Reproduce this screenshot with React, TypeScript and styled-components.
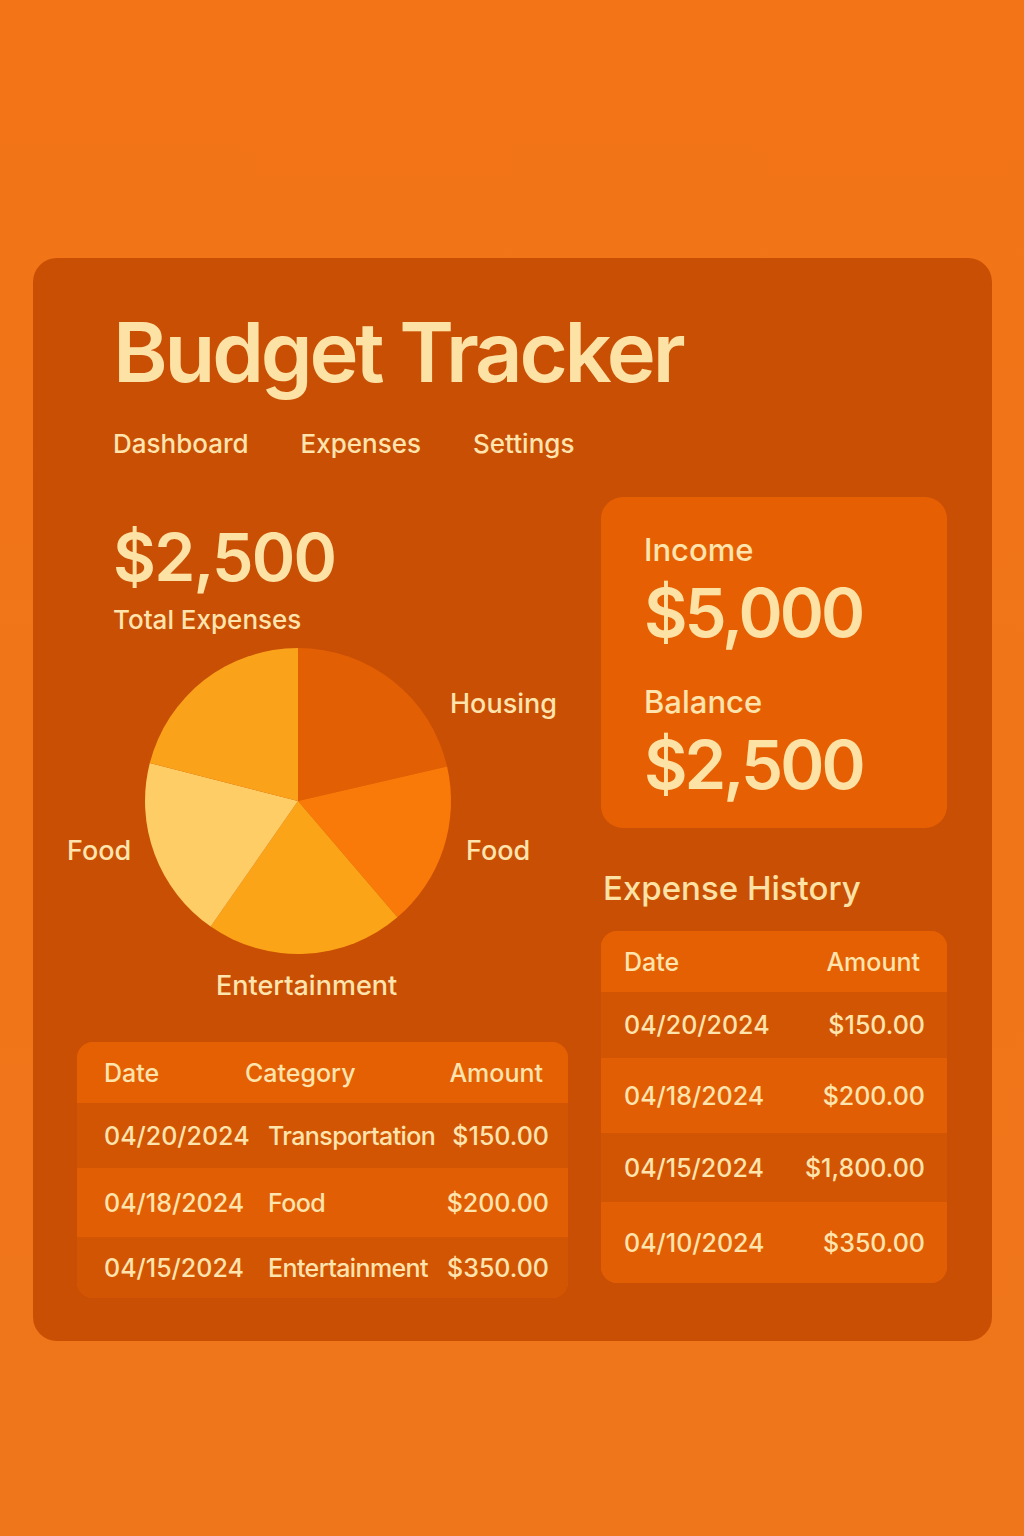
import React from 'react';
import styled, { createGlobalStyle } from 'styled-components';

const GlobalStyle = createGlobalStyle`
  html, body {
    margin: 0;
    padding: 0;
    background: #f0741a;
  }
  body {
    font-family: Inter, "Noto Sans", "Liberation Sans", sans-serif;
    color: #ffe4ae;
  }
`;

const slices = [
  { from: 0, to: 77, color: '#e35f04' },
  { from: 77, to: 139.5, color: '#f97a08' },
  { from: 139.5, to: 214.8, color: '#fba418' },
  { from: 214.8, to: 284.4, color: '#fecd65' },
  { from: 284.4, to: 360, color: '#fba21b' },
];

const recent = [
  { date: '04/20/2024', category: 'Transportation', amount: '$150.00', h: 65 },
  { date: '04/18/2024', category: 'Food', amount: '$200.00', h: 69 },
  { date: '04/15/2024', category: 'Entertainment', amount: '$350.00', h: 61 },
];

const history = [
  { date: '04/20/2024', amount: '$150.00', h: 66 },
  { date: '04/18/2024', amount: '$200.00', h: 75 },
  { date: '04/15/2024', amount: '$1,800.00', h: 69 },
  { date: '04/10/2024', amount: '$350.00', h: 81 },
];

const CX = 221;
const CY = 164;
const R = 153;

function pt(a: number) {
  const rad = (a * Math.PI) / 180;
  return `${(CX + R * Math.sin(rad)).toFixed(1)} ${(CY - R * Math.cos(rad)).toFixed(1)}`;
}

function PieChart() {
  return (
    <ChartSvg width="491" height="380" viewBox="0 0 491 380">
      {slices.map((s, i) => (
        <path
          key={i}
          d={`M${CX} ${CY} L${pt(s.from)} A${R} ${R} 0 0 1 ${pt(s.to)} Z`}
          fill={s.color}
        />
      ))}
      <text x="373" y="76">Housing</text>
      <text x="389" y="223">Food</text>
      <text x="-10" y="223">Food</text>
      <text x="139" y="358">Entertainment</text>
    </ChartSvg>
  );
}

export default function App() {
  return (
    <>
      <GlobalStyle />
      <Page>
        <Card>
          <Header>
            <Title>Budget Tracker</Title>
            <Nav>
              <NavItem>Dashboard</NavItem>
              <NavItem>Expenses</NavItem>
              <NavItem>Settings</NavItem>
            </Nav>
          </Header>
          <Main>
            <LeftCol>
              <Summary>
                <BigAmount>$2,500</BigAmount>
                <SummaryLabel>Total Expenses</SummaryLabel>
              </Summary>
              <PieChart />
              <Table>
                <Row $head>
                  <Cell>Date</Cell>
                  <Cell>Category</Cell>
                  <Cell $right>Amount</Cell>
                </Row>
                {recent.map((r, i) => (
                  <Row key={r.date} $dark={i % 2 === 0} $h={r.h}>
                    <Cell>{r.date}</Cell>
                    <Cell $narrow>{r.category}</Cell>
                    <Cell $right>{r.amount}</Cell>
                  </Row>
                ))}
              </Table>
            </LeftCol>
            <RightCol>
              <StatBox>
                <StatLabel>Income</StatLabel>
                <StatValue>$5,000</StatValue>
                <StatLabel $spaced>Balance</StatLabel>
                <StatValue>$2,500</StatValue>
              </StatBox>
              <SectionTitle>Expense History</SectionTitle>
              <HistoryTable>
                <HistoryRow $head>
                  <Cell>Date</Cell>
                  <Cell $right>Amount</Cell>
                </HistoryRow>
                {history.map((r, i) => (
                  <HistoryRow key={r.date} $dark={i % 2 === 0} $h={r.h}>
                    <Cell>{r.date}</Cell>
                    <Cell $right>{r.amount}</Cell>
                  </HistoryRow>
                ))}
              </HistoryTable>
            </RightCol>
          </Main>
        </Card>
      </Page>
    </>
  );
}

const Page = styled.div`
  width: 1024px;
  height: 1536px;
  box-sizing: border-box;
  padding: 258px 32px 0 33px;
  background: linear-gradient(180deg, #f27416 0%, #f07519 50%, #f0761b 100%);
`;

const Card = styled.div`
  box-sizing: border-box;
  width: 959px;
  height: 1083px;
  padding: 52px 45px 0 44px;
  background: #c94f04;
  border-radius: 24px;
`;

const Header = styled.div`
  padding-left: 36px;
`;

const Title = styled.h1`
  margin: 0;
  font-size: 83px;
  line-height: 84px;
  font-weight: 600;
  letter-spacing: -3.2px;
  color: #fde2a6;
`;

const Nav = styled.nav`
  display: flex;
  gap: 52px;
  margin-top: 34px;
`;

const NavItem = styled.span`
  font-size: 26px;
  line-height: 32px;
  font-weight: 500;
`;

const Main = styled.div`
  display: grid;
  grid-template-columns: 491px 346px;
  gap: 33px;
  margin-top: 37px;
`;

const LeftCol = styled.div`
  display: flex;
  flex-direction: column;
`;

const Summary = styled.div`
  padding: 24px 0 0 36px;
`;

const BigAmount = styled.div`
  font-size: 66px;
  line-height: 72px;
  font-weight: 600;
  letter-spacing: -1.8px;
  color: #fde2a6;
`;

const SummaryLabel = styled.div`
  margin-top: 11px;
  font-size: 26px;
  line-height: 32px;
  font-weight: 500;
`;

const ChartSvg = styled.svg`
  display: block;
  margin-top: 1px;
  overflow: visible;

  text {
    fill: #ffe4ae;
    font-family: Inter, "Noto Sans", sans-serif;
    font-size: 27px;
    font-weight: 500;
  }
`;

const Table = styled.div`
  margin-top: 25px;
  border-radius: 16px;
  overflow: hidden;
  background: #e25e04;
`;

const Row = styled.div<{ $head?: boolean; $dark?: boolean; $h?: number }>`
  display: grid;
  grid-template-columns: ${(p) => (p.$head ? '141px 1fr auto' : '164px 1fr auto')};
  align-items: center;
  height: ${(p) => (p.$head ? 61 : p.$h ?? 65)}px;
  padding: ${(p) => (p.$head ? '0 25px 0 27px' : '0 19px 0 27px')};
  background: ${(p) => (p.$head ? '#e46003' : p.$dark ? '#d25504' : '#e25e04')};
  font-size: 25px;
  font-weight: 500;
`;

const Cell = styled.span<{ $right?: boolean; $narrow?: boolean }>`
  text-align: ${(p) => (p.$right ? 'right' : 'left')};
  letter-spacing: ${(p) => (p.$narrow ? '-0.6px' : 'normal')};
  white-space: nowrap;
`;

const RightCol = styled.div`
  display: flex;
  flex-direction: column;
`;

const StatBox = styled.div`
  box-sizing: border-box;
  height: 331px;
  padding: 35px 0 0 43px;
  background: #e66003;
  border-radius: 22px;
`;

const StatLabel = styled.div<{ $spaced?: boolean }>`
  margin-top: ${(p) => (p.$spaced ? 33 : 0)}px;
  font-size: 31px;
  line-height: 36px;
  font-weight: 500;
`;

const StatValue = styled.div`
  margin-top: 7px;
  font-size: 67px;
  line-height: 76px;
  font-weight: 600;
  letter-spacing: -3px;
  color: #fde2a6;
`;

const SectionTitle = styled.h2`
  margin: 40px 0 0 2px;
  font-size: 33px;
  line-height: 40px;
  font-weight: 500;
  color: #fde2a6;
`;

const HistoryTable = styled.div`
  margin-top: 23px;
  border-radius: 16px;
  overflow: hidden;
  background: #e25e04;
`;

const HistoryRow = styled.div<{ $head?: boolean; $dark?: boolean; $h?: number }>`
  display: flex;
  justify-content: space-between;
  align-items: center;
  height: ${(p) => (p.$head ? 61 : p.$h ?? 72)}px;
  padding: ${(p) => (p.$head ? '0 27px 0 23px' : '0 22px 0 23px')};
  background: ${(p) => (p.$head ? '#e46003' : p.$dark ? '#d25504' : '#e25e04')};
  font-size: 25px;
  font-weight: 500;
`;
